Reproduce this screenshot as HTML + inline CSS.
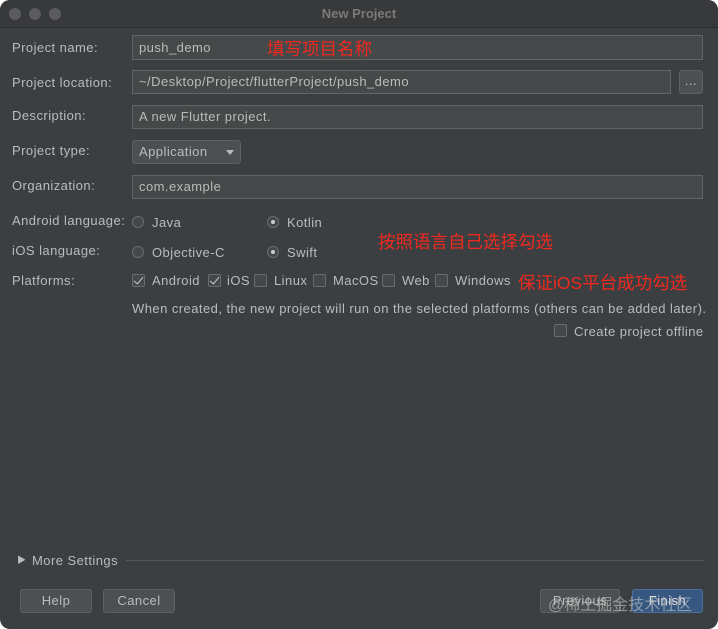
<!DOCTYPE html>
<html><head><style>
body{margin:0;width:718px;height:629px;background:#fff;overflow:hidden;font-family:"Liberation Sans","Noto Sans CJK SC",sans-serif;font-size:13px;color:#bbbbbb;letter-spacing:0.45px}
.win{position:absolute;left:0;top:0;width:718px;height:629px;background:#3c3f41;border-radius:10px;overflow:hidden}
.tb{position:absolute;left:0;top:0;width:718px;height:27px;background:#38393b;border-bottom:1px solid #2b2b2b}
.dot{position:absolute;top:8px;width:12px;height:12px;border-radius:50%;background:#5a5b5d}
.t{position:absolute;white-space:nowrap}
.in{position:absolute;background:#45494a;border:1px solid #646464;height:23px;box-sizing:border-box;padding:0 6px;line-height:22px;color:#bbb}
.red{color:#f0291f;font-size:17.5px;letter-spacing:0}
.rad{position:absolute;width:12px;height:12px;border:1px solid #6b6b6b;border-radius:50%;background:#43494a;box-sizing:border-box}
.rad.on::after{content:"";position:absolute;left:3px;top:3px;width:4px;height:4px;border-radius:50%;background:#ccc}
.cb{position:absolute;width:13px;height:13px;border:1px solid #6b6b6b;background:#43494a;box-sizing:border-box;border-radius:2px}
.cb.on::after{content:"";position:absolute;left:3px;top:0px;width:4px;height:8px;border:solid #ccc;border-width:0 1.5px 1.5px 0;transform:rotate(40deg)}
.btn{position:absolute;height:24px;border:1px solid #5e6060;background:#4c5052;border-radius:3px;box-sizing:border-box;text-align:center;line-height:22px;color:#bbb}
</style></head><body>
<div class="win">
<div class="tb"><div class="dot" style="left:9px"></div><div class="dot" style="left:29px"></div><div class="dot" style="left:49px"></div>
<div class="t" style="left:0;width:718px;text-align:center;top:6px;font-weight:bold;color:#7a7a7a;letter-spacing:0">New Project</div></div>

<div class="t" style="left:12px;top:40px">Project name:</div>
<div class="in" style="left:132px;top:35px;width:571px;height:25px;line-height:24px">push_demo</div>
<div class="t red" style="left:267px;top:36px">填写项目名称</div>

<div class="t" style="left:12px;top:75px">Project location:</div>
<div class="in" style="left:132px;top:70px;width:539px;height:24px">~/Desktop/Project/flutterProject/push_demo</div>
<div class="btn" style="left:679px;top:70px;width:24px;line-height:20px">...</div>

<div class="t" style="left:12px;top:108px">Description:</div>
<div class="in" style="left:132px;top:105px;width:571px;height:24px">A new Flutter project.</div>

<div class="t" style="left:12px;top:143px">Project type:</div>
<div class="btn" style="left:132px;top:140px;width:109px;height:24px;text-align:left;padding-left:6px">Application<span style="position:absolute;right:6px;top:9px;border:4px solid transparent;border-top:5px solid #bbb"></span></div>

<div class="t" style="left:12px;top:178px">Organization:</div>
<div class="in" style="left:132px;top:175px;width:571px;height:24px">com.example</div>

<div class="t" style="left:12px;top:213px">Android language:</div>
<div class="rad" style="left:132px;top:216px"></div><div class="t" style="left:152px;top:215px">Java</div>
<div class="rad on" style="left:267px;top:216px"></div><div class="t" style="left:287px;top:215px">Kotlin</div>
<div class="t red" style="left:378px;top:229px">按照语言自己选择勾选</div>

<div class="t" style="left:12px;top:243px">iOS language:</div>
<div class="rad" style="left:132px;top:246px"></div><div class="t" style="left:152px;top:245px">Objective-C</div>
<div class="rad on" style="left:267px;top:246px"></div><div class="t" style="left:287px;top:245px">Swift</div>

<div class="t" style="left:12px;top:273px">Platforms:</div>
<div class="cb on" style="left:132px;top:274px"></div><div class="t" style="left:152px;top:273px">Android</div>
<div class="cb on" style="left:208px;top:274px"></div><div class="t" style="left:227px;top:273px">iOS</div>
<div class="cb" style="left:254px;top:274px"></div><div class="t" style="left:274px;top:273px">Linux</div>
<div class="cb" style="left:313px;top:274px"></div><div class="t" style="left:333px;top:273px">MacOS</div>
<div class="cb" style="left:382px;top:274px"></div><div class="t" style="left:402px;top:273px">Web</div>
<div class="cb" style="left:435px;top:274px"></div><div class="t" style="left:455px;top:273px">Windows</div>
<div class="t red" style="left:518px;top:270px">保证iOS平台成功勾选</div>

<div class="t" style="left:132px;top:301px">When created, the new project will run on the selected platforms (others can be added later).</div>
<div class="cb" style="left:554px;top:324px"></div><div class="t" style="left:574px;top:324px">Create project offline</div>

<div class="t" style="left:17px;top:553px;font-size:9px">▶</div>
<div class="t" style="left:32px;top:553px">More Settings</div>
<div style="position:absolute;left:126px;top:560px;width:578px;height:1px;background:#55585a"></div>

<div class="btn" style="left:20px;top:589px;width:72px">Help</div>
<div class="btn" style="left:103px;top:589px;width:72px">Cancel</div>
<div class="btn" style="left:540px;top:589px;width:80px">Previous</div>
<div class="btn" style="left:632px;top:589px;width:71px;background:#365880;border-color:#4c6e98;color:#ddd">Finish</div>
<div class="t" style="left:548px;top:591px;color:rgba(200,200,200,.6);font-size:16px;letter-spacing:0">@稀土掘金技术社区</div>
</div>
</body></html>
